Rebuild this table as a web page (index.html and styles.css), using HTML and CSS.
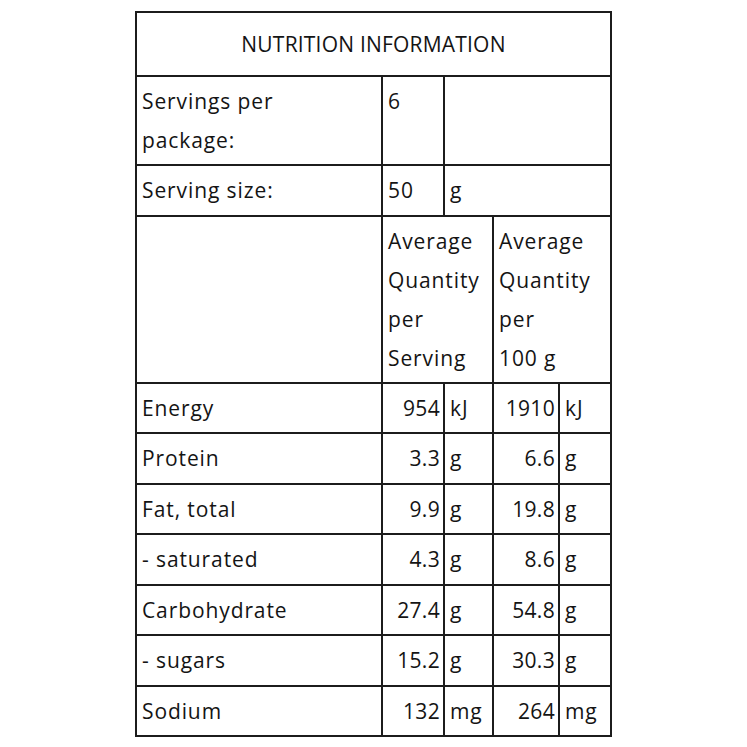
FILE: index.html
```html
<!DOCTYPE html>
<html>
<head>
<meta charset="utf-8">
<link rel="stylesheet" href="styles.css">
</head>
<body>
<div class="page">
<table class="nutri">
  <colgroup>
    <col class="c1"><col class="c2"><col class="c3"><col class="c4"><col class="c5">
  </colgroup>
  <tr><td colspan="5" class="title">NUTRITION INFORMATION</td></tr>
  <tr class="top"><td>Servings per<br>package:</td><td>6</td><td colspan="3"></td></tr>
  <tr><td>Serving size:</td><td>50</td><td colspan="3">g</td></tr>
  <tr class="top"><td></td><td colspan="2">Average<br>Quantity<br>per<br>Serving</td><td colspan="2">Average<br>Quantity<br>per<br>100 g</td></tr>
  <tr><td>Energy</td><td class="num">954</td><td>kJ</td><td class="num">1910</td><td>kJ</td></tr>
  <tr><td>Protein</td><td class="num">3.3</td><td>g</td><td class="num">6.6</td><td>g</td></tr>
  <tr><td>Fat, total</td><td class="num">9.9</td><td>g</td><td class="num">19.8</td><td>g</td></tr>
  <tr><td>- saturated</td><td class="num">4.3</td><td>g</td><td class="num">8.6</td><td>g</td></tr>
  <tr><td>Carbohydrate</td><td class="num">27.4</td><td>g</td><td class="num">54.8</td><td>g</td></tr>
  <tr><td>- sugars</td><td class="num">15.2</td><td>g</td><td class="num">30.3</td><td>g</td></tr>
  <tr><td>Sodium</td><td class="num">132</td><td>mg</td><td class="num">264</td><td>mg</td></tr>
</table>
</div>
</body>
</html>
```
FILE: styles.css
```css
html, body {
  margin: 0;
  padding: 0;
  background: #fff;
}
.page {
  padding-top: 11px;
  display: flex;
  justify-content: center;
}
.nutri {
  border-collapse: collapse;
  table-layout: fixed;
  width: 475px;
  font-family: "Open Sans", "DejaVu Sans", sans-serif;
  font-size: 21px;
  letter-spacing: 0.9px;
  color: #141414;
  border: 2px solid #1c1c1c;
}
.c1 { width: 246px; }
.c2 { width: 62px; }
.c3 { width: 49px; }
.c4 { width: 66px; }
.c5 { width: 52px; }
.nutri td {
  border: 2px solid #1c1c1c;
  padding: 5px 3px 4.5px 5px;
  line-height: 39px;
  vertical-align: middle;
  text-align: left;
  white-space: nowrap;
}
.nutri tr.top td {
  vertical-align: top;
  padding-bottom: 4px;
}
.nutri td.num {
  text-align: right;
  padding-right: 3px;
  letter-spacing: 0.3px;
}
.nutri td.title {
  text-align: center;
  letter-spacing: 0.2px;
  padding: 12px 5px 11px;
}
```
